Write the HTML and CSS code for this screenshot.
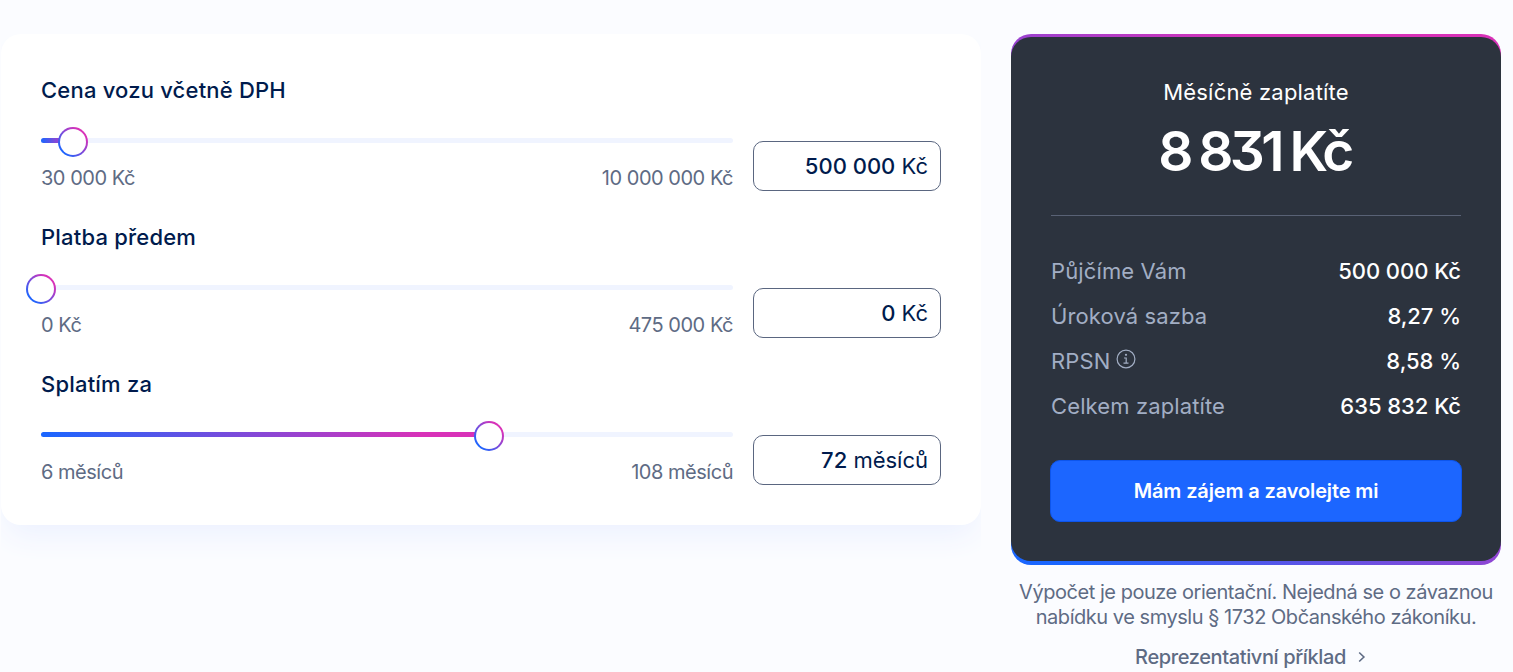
FILE: index.html
```html
<!DOCTYPE html>
<html lang="cs">
<head>
  <meta charset="UTF-8" />
  <title>Kalkulačka úvěru na vůz</title>
  <link rel="stylesheet" href="styles.css">
</head>
<body>

<main class="calculator">
  <section class="card">
    <div class="field">
      <div class="field-main">
        <h3>Cena vozu včetně DPH</h3>
        <div class="track">
          <div class="fill" style="width: 4.6%"></div>
          <span class="thumb" style="left: 4.6%"></span>
        </div>
        <div class="limits"><span>30 000 Kč</span><span>10 000 000 Kč</span></div>
      </div>
      <div class="value"><b>500 000</b> <span>Kč</span></div>
    </div>

    <div class="field">
      <div class="field-main">
        <h3>Platba předem</h3>
        <div class="track">
          <div class="fill" style="width: 0%"></div>
          <span class="thumb" style="left: 0%"></span>
        </div>
        <div class="limits"><span>0 Kč</span><span>475 000 Kč</span></div>
      </div>
      <div class="value"><b>0</b> <span>Kč</span></div>
    </div>

    <div class="field">
      <div class="field-main">
        <h3>Splatím za</h3>
        <div class="track">
          <div class="fill" style="width: 64.7%"></div>
          <span class="thumb" style="left: 64.7%"></span>
        </div>
        <div class="limits"><span>6 měsíců</span><span>108 měsíců</span></div>
      </div>
      <div class="value"><b>72</b> <span>měsíců</span></div>
    </div>
  </section>

  <aside class="summary">
    <div class="result">
      <div class="result-inner">
        <p class="result-title">Měsíčně zaplatíte</p>
        <p class="price">8 831 Kč</p>
        <dl>
          <div class="row"><dt>Půjčíme Vám</dt><dd>500 000 Kč</dd></div>
          <div class="row"><dt>Úroková sazba</dt><dd>8,27 %</dd></div>
          <div class="row">
            <dt>RPSN
              <svg class="info" viewBox="0 0 20 20" width="20" height="20" fill="none" stroke="currentColor">
                <circle cx="10" cy="10" r="8.9" stroke-width="1.2" />
                <path d="M8 9h2.2v5M7.5 14.2h5" stroke-width="1.2" />
                <circle cx="10" cy="5.8" r="1.1" fill="currentColor" stroke="none" />
              </svg>
            </dt>
            <dd>8,58 %</dd>
          </div>
          <div class="row"><dt>Celkem zaplatíte</dt><dd>635 832 Kč</dd></div>
        </dl>
        <button>Mám zájem a zavolejte mi</button>
      </div>
    </div>
    <p class="note">Výpočet je pouze orientační. Nejedná se o závaznou<br>nabídku ve smyslu § 1732 Občanského zákoníku.</p>
    <a class="example" href="#">Reprezentativní příklad
      <svg viewBox="0 0 8 12" width="8" height="12" fill="none" stroke="currentColor" stroke-width="1.6"><path d="M1.2 1.5 5.9 6 1.2 10.5" /></svg>
    </a>
  </aside>
</main>

</body>
</html>
```
FILE: styles.css
```css
* {
  box-sizing: border-box;
}
body {
  margin: 0;
  height: 672px;
  overflow: hidden;
  background: #fbfcff;
  color: #001b4d;
  font-family: Inter, "Liberation Sans", sans-serif;
}
h3, p, dl, dd {
  margin: 0;
}
.calculator {
  display: flex;
  align-items: flex-start;
  gap: 30px;
  padding: 34px 12px 0 1px;
}
.card {
  width: 980px;
  padding: 40px;
  display: flex;
  flex-direction: column;
  gap: 30px;
  background: white;
  border-radius: 20px;
  box-shadow: 0 16px 30px -6px #ecf1ff;
  clip-path: inset(0 0 -60px 0);
}
.field {
  display: flex;
  align-items: flex-end;
  gap: 20px;
}
.field-main {
  flex: 1;
}
h3 {
  font-size: 22px;
  font-weight: 480;
  line-height: 32px;
  letter-spacing: 0.2px;
}
.track {
  position: relative;
  height: 5px;
  margin-top: 32px;
  background: #f0f4ff;
  border-radius: 3px;
}
.fill {
  height: 5px;
  border-radius: 3px;
  background: linear-gradient(90deg, #1a66ff, #d831b8 85%);
}
.thumb {
  position: absolute;
  top: -11px;
  width: 30px;
  height: 30px;
  margin-left: -15px;
  border: 2px solid transparent;
  border-radius: 50%;
  background: linear-gradient(white, white) padding-box, linear-gradient(45deg, #1a66ff 15%, #d831b8 80%) border-box;
}
.limits {
  display: flex;
  justify-content: space-between;
  margin-top: 22px;
  font-size: 20px;
  line-height: 26px;
  letter-spacing: -0.48px;
  color: #5e6b84;
}
.value {
  width: 188px;
  height: 50px;
  padding: 0 12px;
  border: 1px solid #5a6680;
  border-radius: 10px;
  font-size: 22px;
  line-height: 48px;
  text-align: right;
}
.value b {
  font-weight: 500;
}
.summary {
  width: 490px;
  text-align: center;
}
.result {
  padding: 3px 0 4px;
  border-radius: 20px;
  background: linear-gradient(45deg, #1a66ff 5%, #d831b8 75%);
}
.result-inner {
  height: 524px;
  padding: 39px 40px 0;
  border-radius: 20px;
  background: #2c333e;
  color: white;
}
.result-title {
  font-size: 22px;
  line-height: 32px;
  letter-spacing: 0.2px;
}
.price {
  height: 108px;
  padding-right: 3px;
  border-bottom: 1px solid #596275;
  font-size: 55px;
  font-weight: 600;
  line-height: 86px;
  letter-spacing: -3.6px;
  word-spacing: -1.8px;
  font-feature-settings: "cv09";
}
dl {
  margin-top: 33px;
}
.row {
  display: flex;
  justify-content: space-between;
  height: 45px;
  font-size: 22px;
  line-height: 45px;
  letter-spacing: 0.12px;
}
dt {
  color: #a2aec4;
}
dd {
  font-weight: 480;
  letter-spacing: -0.05px;
}
.info {
  margin-left: -1px;
  vertical-align: 0;
}
button {
  width: 412px;
  height: 62px;
  margin: 31px -1px 0;
  padding: 0;
  border: 1px solid #0d55ec;
  border-radius: 10px;
  background: #1c66ff;
  color: white;
  font-family: inherit;
  font-size: 20px;
  font-weight: 600;
  letter-spacing: -0.13px;
  cursor: pointer;
}
.note {
  margin: 15px -10px 0;
  font-size: 20px;
  line-height: 25px;
  letter-spacing: -0.46px;
  color: #5e6b84;
}
.example {
  display: inline-flex;
  align-items: center;
  gap: 12px;
  margin-top: 14px;
  padding-right: 11px;
  color: #5e6b84;
  font-size: 20px;
  font-weight: 500;
  line-height: 26px;
  letter-spacing: -0.38px;
  text-decoration: none;
}
```
